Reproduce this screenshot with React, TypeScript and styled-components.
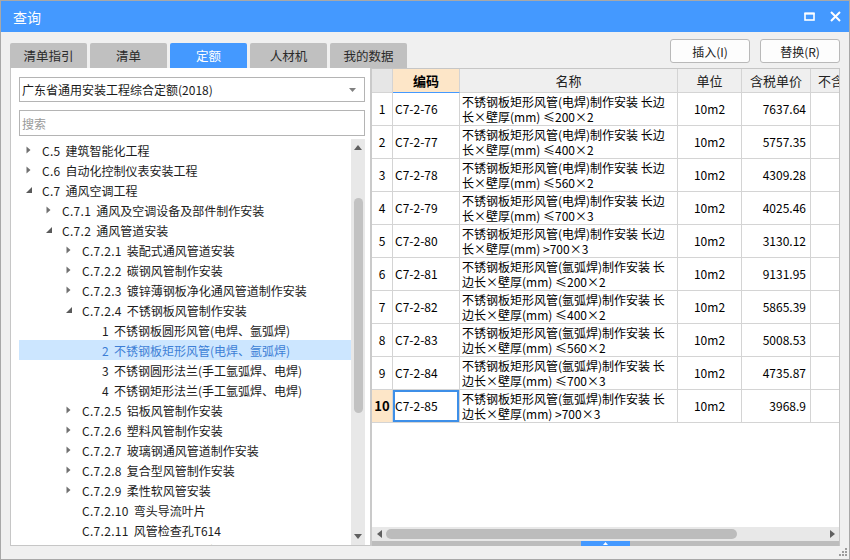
import React from 'react';
import styled, { createGlobalStyle, css } from 'styled-components';

const GlobalStyle = createGlobalStyle`
  html, body {
    margin: 0;
    padding: 0;
    background: #ffffff;
  }
  body {
    font-family: "Noto Sans CJK SC", "Microsoft YaHei", "Liberation Sans", sans-serif;
    font-size: 12px;
    color: #1a1a1a;
  }
  * {
    box-sizing: border-box;
  }
`;

const Window = styled.div`
  width: 850px;
  height: 560px;
  border: 1px solid #a8a8a8;
  background: #f0f0f0;
  display: flex;
  flex-direction: column;
  overflow: hidden;
`;

const TitleBar = styled.div`
  height: 31px;
  flex: none;
  background: #4499ff;
  color: #ffffff;
  display: flex;
  align-items: center;
  padding: 0 8px 0 12px;
`;

const Title = styled.div`
  font-size: 14px;
  flex: 1;
`;

const TitleIcons = styled.div`
  display: flex;
  align-items: center;
  gap: 15px;
`;

const Body = styled.div`
  padding: 0 9px;
  display: flex;
  flex-direction: column;
`;

const TopRow = styled.div`
  height: 36px;
  display: flex;
  align-items: flex-end;
  justify-content: space-between;
`;

const Tabs = styled.div`
  display: flex;
  gap: 3px;
`;

const Tab = styled.div<{ $active?: boolean }>`
  width: 77px;
  height: 25px;
  border-radius: 2px 2px 0 0;
  display: flex;
  align-items: center;
  justify-content: center;
  font-size: 12.5px;
  background: ${(p) => (p.$active ? '#4499ff' : '#c0c0c0')};
  color: ${(p) => (p.$active ? '#ffffff' : '#2a2a2a')};
`;

const Buttons = styled.div`
  display: flex;
  gap: 10px;
  margin-bottom: 5px;
`;

const Button = styled.div`
  width: 80px;
  height: 24px;
  border: 1px solid #b9b9b9;
  border-radius: 3px;
  background: #fdfdfd;
  display: flex;
  align-items: center;
  justify-content: center;
  font-size: 12px;
  color: #222;
`;

const Content = styled.div`
  height: 478px;
  display: flex;
`;

const LeftPanel = styled.div`
  width: 360px;
  background: #ffffff;
  border-left: 1px solid #c6c6c6;
  border-bottom: 1px solid #c6c6c6;
  padding: 9px 5px 0 8px;
  display: flex;
  flex-direction: column;
`;

const Select = styled.div`
  height: 25px;
  border: 1px solid #b4b4b4;
  display: flex;
  align-items: center;
  padding: 0 8px 0 2px;
  font-size: 12px;
  color: #1a1a1a;
  margin-bottom: 8px;
`;

const SelectText = styled.span`
  flex: 1;
`;

const Search = styled.div`
  height: 26px;
  border: 1px solid #b4b4b4;
  display: flex;
  align-items: center;
  padding: 0 2px;
  color: #9a9a9a;
  font-size: 12px;
  margin-bottom: 3px;
`;

const TreeArea = styled.div`
  flex: 1;
  display: flex;
  min-height: 0;
  overflow: hidden;
`;

const TreeList = styled.div`
  flex: 1;
  padding-top: 1px;
  overflow: hidden;
`;

const TreeRow = styled.div<{ $level: number; $selected?: boolean }>`
  height: 20px;
  display: flex;
  align-items: center;
  white-space: nowrap;
  padding-left: ${(p) => 7 + p.$level * 20}px;
  font-size: 12px;
  color: #1c1c1c;
  ${(p) =>
    p.$selected &&
    css`
      background: #cce6ff;
      color: #3d7fd6;
    `}
`;

const Arrow = styled.span`
  width: 16px;
  flex: none;
  display: flex;
  align-items: center;
`;

const NodeCode = styled.span`
  margin-right: 5px;
  letter-spacing: 0.3px;
`;

const VScroll = styled.div`
  width: 14px;
  flex: none;
  background: #e8e8e8;
  display: flex;
  flex-direction: column;
  align-items: center;
`;

const ScrollArrowBox = styled.div`
  height: 17px;
  flex: none;
  width: 100%;
  display: flex;
  align-items: center;
  justify-content: center;
`;

const VThumb = styled.div`
  width: 9px;
  height: 215px;
  margin-top: 42px;
  border-radius: 5px;
  background: #c2c2c2;
`;

const Spacer = styled.div`
  flex: 1;
`;

const RightPanel = styled.div`
  width: 470px;
  border-top: 1px solid #c6c6c6;
  border-left: 2px solid #cacaca;
  border-right: 1px solid #c6c6c6;
  display: flex;
  flex-direction: column;
`;

const Grid = styled.div`
  flex: 1;
  background: #ffffff;
  overflow: hidden;
  font-family: "Noto Sans CJK SC", "Microsoft YaHei", sans-serif;
  font-size: 12px;
  color: #000;
`;

const GridRow = styled.div<{ $header?: boolean }>`
  display: grid;
  grid-template-columns: 21px 67px 218px 64px 69px 80px;
  height: ${(p) => (p.$header ? 24 : 33)}px;
  width: 519px;
  background: ${(p) => (p.$header ? '#efefef' : '#ffffff')};
`;

const Cell = styled.div<{
  $align?: 'left' | 'center' | 'right';
  $hl?: boolean;
  $bold?: boolean;
  $focus?: boolean;
  $headMark?: boolean;
  $gray?: boolean;
}>`
  border-right: 1px solid #d4d4d4;
  border-bottom: 1px solid #d4d4d4;
  display: flex;
  flex-direction: column;
  justify-content: center;
  align-items: ${(p) =>
    p.$align === 'center' ? 'center' : p.$align === 'right' ? 'flex-end' : 'flex-start'};
  padding: ${(p) => (p.$align === 'right' ? '0 4px 0 0' : '0 2px')};
  line-height: 16px;
  white-space: nowrap;
  overflow: hidden;
  font-weight: ${(p) => (p.$bold ? 700 : 400)};
  ${(p) => p.$hl && css`background: #fde6c8;`}
  ${(p) => p.$gray && css`background: #e6e6e6;`}
  ${(p) => p.$headMark && css`border-bottom: 1px solid #4499ff;`}
  ${(p) => p.$focus && css`box-shadow: inset 0 0 0 2px #3d8fe8;`}
  font-size: ${(p) => (p.$bold ? 13 : 12)}px;
`;

const NameLine = styled.span`
  display: block;
  height: 15px;
  line-height: 15px;
`;

const HeadText = styled.span`
  font-size: 13px;
  color: #222;
`;

const HScroll = styled.div`
  height: 14px;
  flex: none;
  background: #e8e8e8;
  display: flex;
  align-items: center;
`;

const HArrowBox = styled.div`
  width: 14px;
  height: 100%;
  flex: none;
  display: flex;
  align-items: center;
  justify-content: center;
`;

const HThumb = styled.div`
  width: 351px;
  height: 10px;
  border-radius: 5px;
  background: #bcbcbc;
`;

const BottomBar = styled.div`
  height: 5px;
  flex: none;
  background: #bdbdbd;
  display: flex;
  justify-content: center;
`;

const BlueHandle = styled.div`
  width: 49px;
  height: 5px;
  background: #4499ff;
  display: flex;
  align-items: center;
  justify-content: center;
`;

const Footer = styled.div`
  flex: 1;
  display: flex;
  justify-content: flex-end;
  align-items: flex-end;
  padding: 0 1px 2px 0;
`;

type Node = {
  code: string;
  label: string;
  level: number;
  state: 'open' | 'closed' | 'leaf';
  selected?: boolean;
};

const tree: Node[] = [
  { code: 'C.5', label: '建筑智能化工程', level: 0, state: 'closed' },
  { code: 'C.6', label: '自动化控制仪表安装工程', level: 0, state: 'closed' },
  { code: 'C.7', label: '通风空调工程', level: 0, state: 'open' },
  { code: 'C.7.1', label: '通风及空调设备及部件制作安装', level: 1, state: 'closed' },
  { code: 'C.7.2', label: '通风管道安装', level: 1, state: 'open' },
  { code: 'C.7.2.1', label: '装配式通风管道安装', level: 2, state: 'closed' },
  { code: 'C.7.2.2', label: '碳钢风管制作安装', level: 2, state: 'closed' },
  { code: 'C.7.2.3', label: '镀锌薄钢板净化通风管道制作安装', level: 2, state: 'closed' },
  { code: 'C.7.2.4', label: '不锈钢板风管制作安装', level: 2, state: 'open' },
  { code: '1', label: '不锈钢板圆形风管(电焊、氩弧焊)', level: 3, state: 'leaf' },
  { code: '2', label: '不锈钢板矩形风管(电焊、氩弧焊)', level: 3, state: 'leaf', selected: true },
  { code: '3', label: '不锈钢圆形法兰(手工氩弧焊、电焊)', level: 3, state: 'leaf' },
  { code: '4', label: '不锈钢矩形法兰(手工氩弧焊、电焊)', level: 3, state: 'leaf' },
  { code: 'C.7.2.5', label: '铝板风管制作安装', level: 2, state: 'closed' },
  { code: 'C.7.2.6', label: '塑料风管制作安装', level: 2, state: 'closed' },
  { code: 'C.7.2.7', label: '玻璃钢通风管道制作安装', level: 2, state: 'closed' },
  { code: 'C.7.2.8', label: '复合型风管制作安装', level: 2, state: 'closed' },
  { code: 'C.7.2.9', label: '柔性软风管安装', level: 2, state: 'closed' },
  { code: 'C.7.2.10', label: '弯头导流叶片', level: 2, state: 'leaf' },
  { code: 'C.7.2.11', label: '风管检查孔T614', level: 2, state: 'leaf' },
  { code: 'C.7.2.12', label: '温度、风量测定孔T615', level: 2, state: 'leaf' },
];

type Item = { code: string; weld: 'dh' | 'yh'; size: string; price: string };

const items: Item[] = [
  { code: 'C7-2-76', weld: 'dh', size: '≤200×2', price: '7637.64' },
  { code: 'C7-2-77', weld: 'dh', size: '≤400×2', price: '5757.35' },
  { code: 'C7-2-78', weld: 'dh', size: '≤560×2', price: '4309.28' },
  { code: 'C7-2-79', weld: 'dh', size: '≤700×3', price: '4025.46' },
  { code: 'C7-2-80', weld: 'dh', size: '>700×3', price: '3130.12' },
  { code: 'C7-2-81', weld: 'yh', size: '≤200×2', price: '9131.95' },
  { code: 'C7-2-82', weld: 'yh', size: '≤400×2', price: '5865.39' },
  { code: 'C7-2-83', weld: 'yh', size: '≤560×2', price: '5008.53' },
  { code: 'C7-2-84', weld: 'yh', size: '≤700×3', price: '4735.87' },
  { code: 'C7-2-85', weld: 'yh', size: '>700×3', price: '3968.9' },
];

// the grid wraps names at the column edge, so the two lines are fixed here
const nameLines = (it: Item): [string, string] =>
  it.weld === 'dh'
    ? ['不锈钢板矩形风管(电焊)制作安装  长边', `长×壁厚(mm) ${it.size}`]
    : ['不锈钢板矩形风管(氩弧焊)制作安装 长', `边长×壁厚(mm) ${it.size}`];

const Closed = () => (
  <svg width="5" height="8" viewBox="0 0 5 8">
    <path d="M0.5 0.5 L4.5 4 L0.5 7.5 Z" fill="#707070" />
  </svg>
);

const Open = () => (
  <svg width="6" height="6" viewBox="0 0 6 6">
    <path d="M6 0 L6 6 L0 6 Z" fill="#5a5a5a" />
  </svg>
);

const TreeNode = ({ node }: { node: Node }) => (
  <TreeRow $level={node.level} $selected={node.selected}>
    <Arrow>{node.state === 'closed' ? <Closed /> : node.state === 'open' ? <Open /> : null}</Arrow>
    <NodeCode>{node.code}</NodeCode>
    <span>{node.label}</span>
  </TreeRow>
);

export default function App() {
  return (
    <>
      <GlobalStyle />
      <Window>
        <TitleBar>
          <Title>查询</Title>
          <TitleIcons>
            <svg width="11" height="9" viewBox="0 0 11 9">
              <rect x="1" y="1.5" width="9" height="6.5" fill="none" stroke="#fff" strokeWidth="1.6" />
              <rect x="0.5" y="0.5" width="10" height="2" fill="#fff" />
            </svg>
            <svg width="11" height="11" viewBox="0 0 11 11">
              <path d="M1 1 L10 10 M10 1 L1 10" stroke="#fff" strokeWidth="2" />
            </svg>
          </TitleIcons>
        </TitleBar>
        <Body>
          <TopRow>
            <Tabs>
              <Tab>清单指引</Tab>
              <Tab>清单</Tab>
              <Tab $active>定额</Tab>
              <Tab>人材机</Tab>
              <Tab>我的数据</Tab>
            </Tabs>
            <Buttons>
              <Button>插入(I)</Button>
              <Button>替换(R)</Button>
            </Buttons>
          </TopRow>
          <Content>
            <LeftPanel>
              <Select>
                <SelectText>广东省通用安装工程综合定额(2018)</SelectText>
                <svg width="7" height="4" viewBox="0 0 7 4">
                  <path d="M0 0 L7 0 L3.5 4 Z" fill="#808080" />
                </svg>
              </Select>
              <Search>搜索</Search>
              <TreeArea>
                <TreeList>
                  {tree.map((n) => (
                    <TreeNode key={n.code + n.label} node={n} />
                  ))}
                </TreeList>
                <VScroll>
                  <ScrollArrowBox>
                    <svg width="8" height="5" viewBox="0 0 8 5">
                      <path d="M0 5 L4 0 L8 5 Z" fill="#606060" />
                    </svg>
                  </ScrollArrowBox>
                  <VThumb />
                  <Spacer />
                  <ScrollArrowBox>
                    <svg width="8" height="5" viewBox="0 0 8 5">
                      <path d="M0 0 L8 0 L4 5 Z" fill="#606060" />
                    </svg>
                  </ScrollArrowBox>
                </VScroll>
              </TreeArea>
            </LeftPanel>
            <RightPanel>
              <Grid>
                <GridRow $header>
                  <Cell $gray />
                  <Cell $align="center" $hl $bold $headMark>
                    编码
                  </Cell>
                  <Cell $align="center">
                    <HeadText>名称</HeadText>
                  </Cell>
                  <Cell $align="center">
                    <HeadText>单位</HeadText>
                  </Cell>
                  <Cell $align="center">
                    <HeadText>含税单价</HeadText>
                  </Cell>
                  <Cell $align="center">
                    <HeadText>不含税单价</HeadText>
                  </Cell>
                </GridRow>
                {items.map((it, i) => {
                  const last = i === items.length - 1;
                  const [l1, l2] = nameLines(it);
                  return (
                    <GridRow key={it.code}>
                      <Cell $align="center" $hl={last} $bold={last}>
                        {i + 1}
                      </Cell>
                      <Cell $focus={last}>{it.code}</Cell>
                      <Cell>
                        <NameLine>{l1}</NameLine>
                        <NameLine>{l2}</NameLine>
                      </Cell>
                      <Cell $align="center">10m2</Cell>
                      <Cell $align="right">{it.price}</Cell>
                      <Cell />
                    </GridRow>
                  );
                })}
              </Grid>
              <HScroll>
                <HArrowBox>
                  <svg width="5" height="8" viewBox="0 0 5 8">
                    <path d="M5 0 L5 8 L0 4 Z" fill="#606060" />
                  </svg>
                </HArrowBox>
                <HThumb />
                <Spacer />
                <HArrowBox>
                  <svg width="5" height="8" viewBox="0 0 5 8">
                    <path d="M0 0 L5 4 L0 8 Z" fill="#606060" />
                  </svg>
                </HArrowBox>
              </HScroll>
              <BottomBar>
                <BlueHandle>
                  <svg width="5" height="3" viewBox="0 0 5 3">
                    <path d="M0 3 L2.5 0 L5 3 Z" fill="#ffffff" />
                  </svg>
                </BlueHandle>
              </BottomBar>
            </RightPanel>
          </Content>
        </Body>
        <Footer>
          <svg width="11" height="10" viewBox="0 0 11 10">
            <rect x="8" y="1" width="2" height="2" fill="#9c9c9c" />
            <rect x="5" y="4" width="2" height="2" fill="#9c9c9c" />
            <rect x="8" y="4" width="2" height="2" fill="#9c9c9c" />
            <rect x="2" y="7" width="2" height="2" fill="#9c9c9c" />
            <rect x="5" y="7" width="2" height="2" fill="#9c9c9c" />
            <rect x="8" y="7" width="2" height="2" fill="#9c9c9c" />
          </svg>
        </Footer>
      </Window>
    </>
  );
}
